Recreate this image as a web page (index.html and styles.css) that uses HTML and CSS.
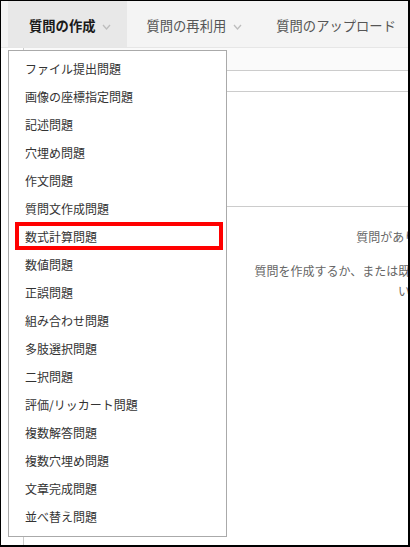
FILE: index.html
```html
<!DOCTYPE html>
<html lang="ja">
<head>
    <meta charset="UTF-8">
    <meta name="viewport" content="width=device-width, initial-scale=1.0">
    <title>質問の作成</title>
    <link rel="stylesheet" href="styles.css">
</head>
<body>
<div class="frame">
    <nav class="tabs">
        <div class="tab active">
            <span>質問の作成</span>
            <svg class="chev" width="9" height="6" viewBox="0 0 9 6"><polyline points="1,1 4.5,5 8,1" /></svg>
        </div>
        <div class="tab">
            <span>質問の再利用</span>
            <svg class="chev" width="9" height="6" viewBox="0 0 9 6"><polyline points="1,1 4.5,5 8,1" /></svg>
        </div>
        <div class="tab">
            <span>質問のアップロード</span>
        </div>
    </nav>

    <div class="workspace">
        <div class="toolbar"></div>
        <div class="filter"></div>
        <div class="list-head"></div>
        <div class="empty">
            <p class="empty-title">質問がありません。</p>
            <p class="empty-text">質問を作成するか、または既存の質問を再利用してください。</p>
        </div>
    </div>

    <!-- Dropdown -->
    <ul class="menu">
        <li>ファイル提出問題</li>
        <li>画像の座標指定問題</li>
        <li>記述問題</li>
        <li>穴埋め問題</li>
        <li>作文問題</li>
        <li>質問文作成問題</li>
        <li class="marked">数式計算問題</li>
        <li>数値問題</li>
        <li>正誤問題</li>
        <li>組み合わせ問題</li>
        <li>多肢選択問題</li>
        <li>二択問題</li>
        <li>評価/リッカート問題</li>
        <li>複数解答問題</li>
        <li>複数穴埋め問題</li>
        <li>文章完成問題</li>
        <li>並べ替え問題</li>
    </ul>
</div>
</body>
</html>
```

FILE: styles.css
```css
body {
    margin: 0;
    background-color: #fff;
    font-family: "Noto Sans CJK JP", "Noto Sans", sans-serif;
}

.frame {
    width: 410px;
    height: 547px;
    box-sizing: border-box;
    border: 1px solid #000;
    border-right-width: 2px;
    border-bottom-width: 2px;
    position: relative;
    overflow: hidden;
}

/* Tab bar */
.tabs {
    display: flex;
    height: 46px;
    padding-left: 7px;
    background-color: #f4f4f4;
    border-bottom: 1px solid #e6e6e6;
}

.tab {
    display: flex;
    align-items: center;
    gap: 7px;
    padding: 3px 15px 0 19px;
    font-size: 13.3px;
    color: #555;
    white-space: nowrap;
}

.tab.active {
    background-color: #e8e8e8;
    color: #1a1a1a;
    font-weight: bold;
    padding-left: 21px;
    padding-right: 16px;
}

.chev {
    margin-top: 2px;
}

.chev polyline {
    fill: none;
    stroke: #bdbdbd;
    stroke-width: 1.3;
}

/* Page behind the menu */
.workspace {
    margin-left: 22px;
    width: 772px;
    border-left: 1px solid #ccc;
    height: 100%;
}

.toolbar {
    height: 22px;
    background-color: #fafafa;
    border-bottom: 1px solid #ccc;
}

.filter {
    height: 20px;
    border-bottom: 1px solid #ccc;
}

.list-head {
    height: 114px;
    border-bottom: 1px solid #ccc;
}

.empty {
    text-align: center;
    color: #666;
    font-size: 12px;
    padding-top: 20px;
}

.empty p {
    margin: 0;
}

.empty-title {
    line-height: 20px;
    margin-bottom: 14px !important;
}

.empty-text {
    max-width: 312px;
    margin: 0 auto !important;
    line-height: 20px;
}

/* Dropdown menu */
.menu {
    position: absolute;
    left: 7px;
    top: 49px;
    width: 219px;
    box-sizing: border-box;
    margin: 0;
    padding: 4px 0 5px;
    list-style: none;
    background-color: #fff;
    border: 1px solid #aaa;
}

.menu li {
    height: 28px;
    line-height: 28px;
    padding-left: 16px;
    font-size: 12px;
    color: #333;
    position: relative;
}

.menu li.marked::after {
    content: "";
    position: absolute;
    left: 6px;
    right: 3px;
    top: -1px;
    bottom: 1px;
    border: 4px solid #f00;
}
```
